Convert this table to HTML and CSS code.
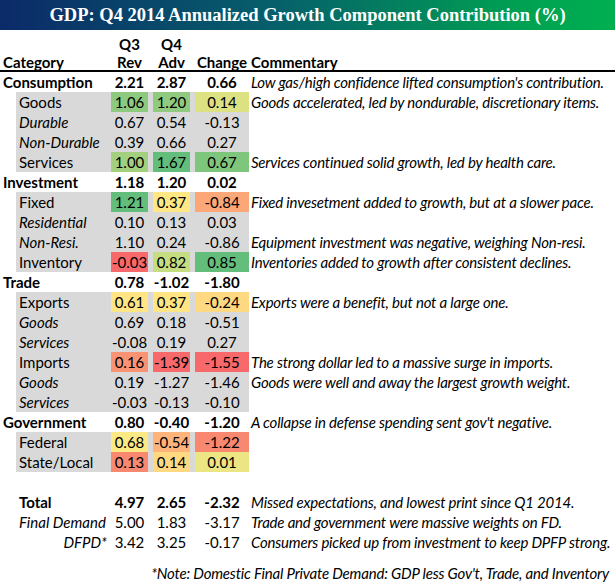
FILE: index.html
```html
<!DOCTYPE html>
<html>
<head>
<meta charset="utf-8">
<link rel="stylesheet" href="styles.css">
</head>
<body>
<div class="page">
  <div class="title">GDP: Q4 2014 Annualized Growth Component Contribution (%)</div>
  <div class="head">
    <div class="row hq">
      <div class="band"><span class="lab"></span><span class="c">Q3</span><span class="c q4">Q4</span><span class="c chg"></span></div>
    </div>
    <div class="row hc">
      <div class="band"><span class="lab">Category</span><span class="c">Rev</span><span class="c q4">Adv</span><span class="c chg">Change</span></div>
      <span class="com">Commentary</span>
    </div>
  </div>

  <div class="row main">
    <div class="band"><span class="lab">Consumption</span><span class="c">2.21</span><span class="c q4">2.87</span><span class="c chg">0.66</span></div>
    <span class="com">Low gas/high confidence lifted consumption's contribution.</span>
  </div>
  <div class="row sub">
    <div class="band"><span class="lab">Goods</span><span class="c g-a">1.06</span><span class="c q4 g-b">1.20</span><span class="c chg y-g">0.14</span></div>
    <span class="com">Goods accelerated, led by nondurable, discretionary items.</span>
  </div>
  <div class="row sub it">
    <div class="band"><span class="lab">Durable</span><span class="c">0.67</span><span class="c q4">0.54</span><span class="c chg">-0.13</span></div>
  </div>
  <div class="row sub it">
    <div class="band"><span class="lab">Non-Durable</span><span class="c">0.39</span><span class="c q4">0.66</span><span class="c chg">0.27</span></div>
  </div>
  <div class="row sub">
    <div class="band"><span class="lab">Services</span><span class="c g-c">1.00</span><span class="c q4 g-max">1.67</span><span class="c chg g-d">0.67</span></div>
    <span class="com">Services continued solid growth, led by health care.</span>
  </div>

  <div class="row main">
    <div class="band"><span class="lab">Investment</span><span class="c">1.18</span><span class="c q4">1.20</span><span class="c chg">0.02</span></div>
  </div>
  <div class="row sub">
    <div class="band"><span class="lab">Fixed</span><span class="c g-max">1.21</span><span class="c q4 y-a">0.37</span><span class="c chg o-a">-0.84</span></div>
    <span class="com">Fixed invesetment added to growth, but at a slower pace.</span>
  </div>
  <div class="row sub it">
    <div class="band"><span class="lab">Residential</span><span class="c">0.10</span><span class="c q4">0.13</span><span class="c chg">0.03</span></div>
  </div>
  <div class="row sub it">
    <div class="band"><span class="lab">Non-Resi.</span><span class="c">1.10</span><span class="c q4">0.24</span><span class="c chg">-0.86</span></div>
    <span class="com">Equipment investment was negative, weighing Non-resi.</span>
  </div>
  <div class="row sub">
    <div class="band"><span class="lab">Inventory</span><span class="c r-max">-0.03</span><span class="c q4 g-e">0.82</span><span class="c chg g-max">0.85</span></div>
    <span class="com">Inventories added to growth after consistent declines.</span>
  </div>

  <div class="row main">
    <div class="band"><span class="lab">Trade</span><span class="c">0.78</span><span class="c q4">-1.02</span><span class="c chg">-1.80</span></div>
  </div>
  <div class="row sub">
    <div class="band"><span class="lab">Exports</span><span class="c y-b">0.61</span><span class="c q4 y-b">0.37</span><span class="c chg y-c">-0.24</span></div>
    <span class="com">Exports were a benefit, but not a large one.</span>
  </div>
  <div class="row sub it">
    <div class="band"><span class="lab">Goods</span><span class="c">0.69</span><span class="c q4">0.18</span><span class="c chg">-0.51</span></div>
  </div>
  <div class="row sub it">
    <div class="band"><span class="lab">Services</span><span class="c">-0.08</span><span class="c q4">0.19</span><span class="c chg">0.27</span></div>
  </div>
  <div class="row sub">
    <div class="band"><span class="lab">Imports</span><span class="c o-b">0.16</span><span class="c q4 r-max">-1.39</span><span class="c chg r-max">-1.55</span></div>
    <span class="com">The strong dollar led to a massive surge in imports.</span>
  </div>
  <div class="row sub it">
    <div class="band"><span class="lab">Goods</span><span class="c">0.19</span><span class="c q4">-1.27</span><span class="c chg">-1.46</span></div>
    <span class="com">Goods were well and away the largest growth weight.</span>
  </div>
  <div class="row sub it">
    <div class="band"><span class="lab">Services</span><span class="c">-0.03</span><span class="c q4">-0.13</span><span class="c chg">-0.10</span></div>
  </div>

  <div class="row main">
    <div class="band"><span class="lab">Government</span><span class="c">0.80</span><span class="c q4">-0.40</span><span class="c chg">-1.20</span></div>
    <span class="com">A collapse in defense spending sent gov't negative.</span>
  </div>
  <div class="row sub">
    <div class="band"><span class="lab">Federal</span><span class="c y-d">0.68</span><span class="c q4 o-c">-0.54</span><span class="c chg o-d">-1.22</span></div>
  </div>
  <div class="row sub">
    <div class="band"><span class="lab">State/Local</span><span class="c o-d">0.13</span><span class="c q4 y-c">0.14</span><span class="c chg y-e">0.01</span></div>
  </div>

  <div class="row tot total">
    <div class="band"><span class="lab">Total</span><span class="c">4.97</span><span class="c q4">2.65</span><span class="c chg">-2.32</span></div>
    <span class="com">Missed expectations, and lowest print since Q1 2014.</span>
  </div>
  <div class="row tot it">
    <div class="band"><span class="lab">Final Demand</span><span class="c">5.00</span><span class="c q4">1.83</span><span class="c chg">-3.17</span></div>
    <span class="com">Trade and government were massive weights on FD.</span>
  </div>
  <div class="row tot it">
    <div class="band"><span class="lab right">DFPD*</span><span class="c">3.42</span><span class="c q4">3.25</span><span class="c chg">-0.17</span></div>
    <span class="com">Consumers picked up from investment to keep DPFP strong.</span>
  </div>

  <div class="note">*Note: Domestic Final Private Demand: GDP less Gov't, Trade, and Inventory</div>
</div>
</body>
</html>
```

FILE: styles.css
```css
html, body {
  margin: 0;
  padding: 0;
  background: #fff;
}
.page {
  width: 615px;
  font-family: "Lato", "Liberation Sans", sans-serif;
  font-size: 15px;
  color: #000;
}
.title {
  height: 30px;
  line-height: 30px;
  text-align: center;
  color: #fff;
  font-family: "Liberation Serif", "DejaVu Serif", serif;
  font-weight: bold;
  font-size: 18.5px;
  background: linear-gradient(to right, #0b2a69 0%, #06606a 45%, #00a152 85%, #00b050 100%);
  white-space: nowrap;
}
.head {
  height: 40px;
  border-bottom: 2px solid #000;
  display: flex;
  flex-direction: column;
  font-weight: bold;
}
.head .hq {
  height: 20px;
  line-height: 20px;
  margin-top: 4px;
}
.head .hc {
  height: 16px;
  line-height: 16px;
}
.row {
  display: flex;
  height: 20px;
  line-height: 20px;
  white-space: nowrap;
}
.band {
  display: grid;
  grid-template-columns: 111px 37px 42px 59px;
  width: 249px;
  flex: none;
}
.sub .band, .tot .band {
  margin-left: 16px;
  width: 233px;
  grid-template-columns: 95px 37px 42px 59px;
}
.sub .band {
  background: #d9d9d9;
}
.lab {
  padding-left: 3px;
}
.lab.right {
  text-align: right;
  padding-right: 4px;
}
.c {
  text-align: center;
  font-style: normal;
}
.q4, .chg {
  margin-left: 5px;
}
.com {
  padding-left: 2px;
  font-style: italic;
  font-weight: normal;
  letter-spacing: -0.2px;
}
.head .com {
  font-style: normal;
  font-weight: bold;
  letter-spacing: 0;
}
.main {
  font-weight: bold;
}
.main .com {
  font-weight: normal;
}
.total .band {
  font-weight: bold;
}
.it .lab {
  font-style: italic;
}
.tot.total {
  margin-top: 20px;
}
.note {
  margin-top: 11px;
  height: 20px;
  line-height: 20px;
  text-align: right;
  font-style: italic;
  padding-right: 6px;
  letter-spacing: -0.2px;
  white-space: nowrap;
}

/* color scale fills */
.g-max { background: #63be7b; }
.g-a { background: #8dc97e; }
.g-b { background: #90ca7e; }
.g-c { background: #a3d07f; }
.g-d { background: #7fc67d; }
.g-e { background: #c5dc81; }
.y-g { background: #dce282; }
.y-a { background: #ffe884; }
.y-b { background: #ffe583; }
.y-c { background: #fed981; }
.y-d { background: #fbe984; }
.y-e { background: #ebe583; }
.o-a { background: #fba777; }
.o-b { background: #fa9373; }
.o-c { background: #fcb47a; }
.o-d { background: #f98870; }
.r-max { background: #f8696b; }
```
